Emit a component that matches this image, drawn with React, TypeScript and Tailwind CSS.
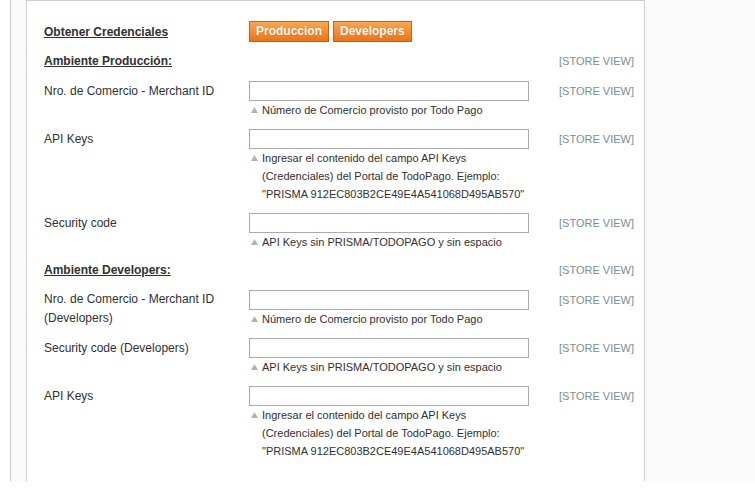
import React from "react";

const Tri = () => (
  <svg width="7" height="6" viewBox="0 0 7 6" className="mt-[6px] ml-[2px] mr-[4px] shrink-0">
    <path d="M3.5 0 L7 6 L0 6 Z" fill="#a9b6ba" />
  </svg>
);

const Scope = () => (
  <div className="w-[85px] pt-[1px] leading-[18px] text-[11px] text-[#7a8d96]">[STORE VIEW]</div>
);

type FieldProps = {
  label: React.ReactNode;
  note: React.ReactNode;
  twoLine?: boolean;
};

const Field = ({ label, note, twoLine }: FieldProps) => (
  <div className="flex mb-[10px]">
    <div
      className={
        twoLine
          ? "w-[205px] leading-[19px] pt-0 text-[12px] text-[#303030]"
          : "w-[205px] leading-[18px] pt-[1px] text-[12px] text-[#303030]"
      }
    >
      {label}
    </div>
    <div className="w-[280px]">
      <div className="h-[20px] w-[280px] border border-[#aaaaaa] bg-white" />
      <div className="flex text-[11px] leading-[18px] text-[#303030]">
        <Tri />
        <div>{note}</div>
      </div>
    </div>
    <div className="w-[30px]" />
    <Scope />
  </div>
);

const Header = ({ text, mb }: { text: string; mb: string }) => (
  <div className={"flex " + mb}>
    <div className="w-[515px] leading-[18px] text-[12px] font-bold underline text-[#303030]">{text}</div>
    <div className="w-[85px] leading-[18px] text-[11px] text-[#7a8d96]">[STORE VIEW]</div>
  </div>
);

const Btn = ({ children }: { children: React.ReactNode }) => (
  <button className="h-[21px] px-[6px] border border-[#c8620f] bg-gradient-to-b from-[#fca64e] to-[#ee7210] text-white font-bold text-[12px] leading-[19px] [text-shadow:0_0_1px_rgba(150,60,0,0.5)]">
    {children}
  </button>
);

const apiNote = (
  <>
    Ingresar el contenido del campo API Keys
    <br />
    (Credenciales) del Portal de TodoPago. Ejemplo:
    <br />
    "PRISMA 912EC803B2CE49E4A541068D495AB570"
  </>
);

const secNote = "API Keys sin PRISMA/TODOPAGO y sin espacio";
const merchNote = "Número de Comercio provisto por Todo Pago";

export default function App() {
  return (
    <div
      className="w-full bg-white pl-[10px]"
      style={{ fontFamily: '"Liberation Sans", Arial, sans-serif', height: 503 }}
    >
      <div className="h-[481px] border-l border-[#cccccc] bg-[#fafafa] pl-[15px]">
        <div className="h-full w-[619px] border-l border-t border-r border-[#d0d0d0] bg-white pl-[17px] pt-[20px]">
          <div className="flex items-center h-[21px]">
            <div className="w-[205px] text-[12px] font-bold underline text-[#303030] leading-[18px]">
              Obtener Credenciales
            </div>
            <div className="flex gap-[4px]">
              <Btn>Produccion</Btn>
              <Btn>Developers</Btn>
            </div>
          </div>
          <div className="h-[10px]" />
          <Header text="Ambiente Producción:" mb="mb-[11px]" />
          <Field label="Nro. de Comercio - Merchant ID" note={merchNote} />
          <Field label="API Keys" note={apiNote} />
          <Field label="Security code" note={secNote} />
          <Header text="Ambiente Developers:" mb="mb-[11px]" />
          <Field
            twoLine
            label={
              <>
                Nro. de Comercio - Merchant ID
                <br />
                (Developers)
              </>
            }
            note={merchNote}
          />
          <Field label="Security code (Developers)" note={secNote} />
          <Field label="API Keys" note={apiNote} />
        </div>
      </div>
    </div>
  );
}
